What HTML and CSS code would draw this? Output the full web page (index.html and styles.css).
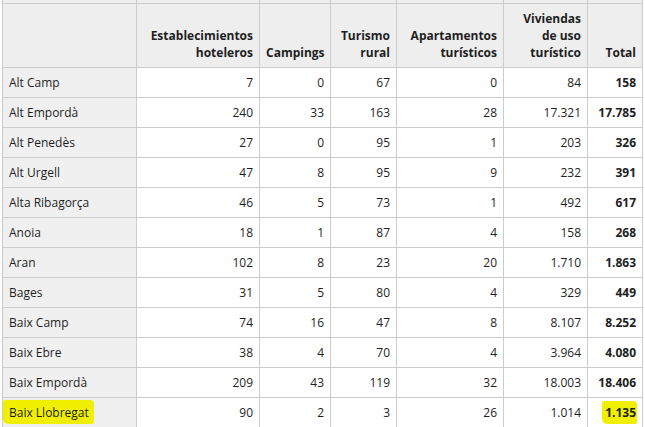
FILE: index.html
```html
<!DOCTYPE html>
<html lang="es">
<head>
<meta charset="utf-8">
<link rel="stylesheet" href="styles.css">
</head>
<body>
<table class="data">
  <colgroup>
    <col class="c-name"><col class="c-hot"><col class="c-camp"><col class="c-rur"><col class="c-apt"><col class="c-viv"><col class="c-tot">
  </colgroup>
  <thead>
    <tr class="cut"><th></th><th></th><th></th><th></th><th></th><th></th><th></th></tr>
    <tr class="head">
      <th></th>
      <th>Establecimientos<br>hoteleros</th>
      <th>Campings</th>
      <th>Turismo<br>rural</th>
      <th>Apartamentos<br>turísticos</th>
      <th>Viviendas<br>de uso<br>turístico</th>
      <th>Total</th>
    </tr>
  </thead>
  <tbody>
    <tr><th>Alt Camp</th><td>7</td><td>0</td><td>67</td><td>0</td><td>84</td><td class="tot">158</td></tr>
    <tr><th>Alt Empordà</th><td>240</td><td>33</td><td>163</td><td>28</td><td>17.321</td><td class="tot">17.785</td></tr>
    <tr><th>Alt Penedès</th><td>27</td><td>0</td><td>95</td><td>1</td><td>203</td><td class="tot">326</td></tr>
    <tr><th>Alt Urgell</th><td>47</td><td>8</td><td>95</td><td>9</td><td>232</td><td class="tot">391</td></tr>
    <tr><th>Alta Ribagorça</th><td>46</td><td>5</td><td>73</td><td>1</td><td>492</td><td class="tot">617</td></tr>
    <tr><th>Anoia</th><td>18</td><td>1</td><td>87</td><td>4</td><td>158</td><td class="tot">268</td></tr>
    <tr><th>Aran</th><td>102</td><td>8</td><td>23</td><td>20</td><td>1.710</td><td class="tot">1.863</td></tr>
    <tr><th>Bages</th><td>31</td><td>5</td><td>80</td><td>4</td><td>329</td><td class="tot">449</td></tr>
    <tr><th>Baix Camp</th><td>74</td><td>16</td><td>47</td><td>8</td><td>8.107</td><td class="tot">8.252</td></tr>
    <tr><th>Baix Ebre</th><td>38</td><td>4</td><td>70</td><td>4</td><td>3.964</td><td class="tot">4.080</td></tr>
    <tr><th>Baix Empordà</th><td>209</td><td>43</td><td>119</td><td>32</td><td>18.003</td><td class="tot">18.406</td></tr>
    <tr><th><span class="mark mark-name">Baix Llobregat</span></th><td>90</td><td>2</td><td>3</td><td>26</td><td>1.014</td><td class="tot"><span class="mark mark-tot">1.135</span></td></tr>
  </tbody>
</table>
</body>
</html>
```

FILE: styles.css
```css
html, body {
  margin: 0;
  padding: 0;
  background: #ffffff;
}

body {
  font-family: "Open Sans", "DejaVu Sans", sans-serif;
  font-size: 12px;
  color: #1e1e1e;
  overflow: hidden;
}

.data {
  margin-left: 2px;
  border-collapse: separate;
  border-spacing: 0;
  table-layout: fixed;
  width: 641px;
  border-left: 1px solid #cccccc;
}

.c-name { width: 134px; }
.c-hot { width: 123px; }
.c-camp { width: 71px; }
.c-rur { width: 66px; }
.c-apt { width: 107px; }
.c-viv { width: 84px; }
.c-tot { width: 55px; }

.data th,
.data td {
  box-sizing: border-box;
  border-right: 1px solid #cccccc;
  border-bottom: 1px solid #cccccc;
  padding: 6px 6px;
  line-height: 17px;
  white-space: nowrap;
}

.cut th {
  height: 4px;
  padding: 0;
  line-height: 0;
  font-size: 0;
  background: #eeeeee;
}

.head th {
  height: 64px;
  background: #eeeeee;
  font-weight: 700;
  text-align: right;
  vertical-align: bottom;
  padding-bottom: 6px;
}

tbody th {
  background: #f0f0f0;
  font-weight: 400;
  text-align: left;
  height: 30px;
}

tbody td {
  text-align: right;
  background: #ffffff;
  height: 30px;
}

tbody td.tot {
  font-weight: 700;
}

.mark {
  background: #f0ef00;
  border-radius: 2px 4px 2px 5px;
}

.mark-name {
  padding: 4px 5px 3px 6px;
  margin-left: -6px;
}

.mark-tot {
  padding: 3px 1px 3px 3px;
  margin-right: -1px;
}
```
